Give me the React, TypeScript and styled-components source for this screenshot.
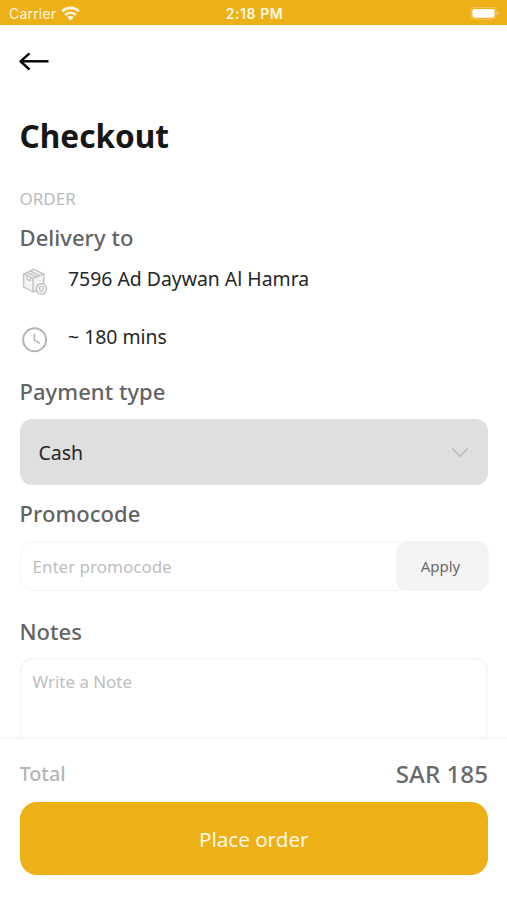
import React, { useState } from "react";
import styled, { createGlobalStyle } from "styled-components";

const GlobalStyle = createGlobalStyle`
  body {
    margin: 0;
    background: white;
    font-family: "Noto Sans", sans-serif;
  }
  * {
    box-sizing: border-box;
  }
`;
const Screen = styled.div`
  width: 100%;
  height: 900px;
  display: flex;
  flex-direction: column;
  overflow: hidden;
  background: white;
`;
const StatusBar = styled.div`
  height: 25px;
  flex-shrink: 0;
  display: grid;
  grid-template-columns: 1fr auto 1fr;
  align-items: center;
  padding: 2px 7px 0px 9px;
  background: #eeb017;
  color: #fff8e4;
  font-family: Inter, sans-serif;
  font-size: 14px;
  line-height: 22px;
`;
const Carrier = styled.div`
  display: flex;
  align-items: center;
  gap: 5px;
  letter-spacing: 0.2px;
`;
const Clock = styled.div`
  font-weight: 600;
  font-size: 14px;
  letter-spacing: 0.55px;
`;
const Battery = styled.div`
  display: flex;
  justify-content: flex-end;
`;
const Header = styled.div`
  height: 73px;
  flex-shrink: 0;
  padding: 26px 0px 0px 18px;
`;
const BackButton = styled.button`
  display: block;
  border: none;
  padding: 0px;
  background: none;
  cursor: pointer;
`;
const Content = styled.div`
  flex: 1;
  min-height: 0;
  overflow: hidden;
  padding: 0px 19px 0px 19.5px;
`;
const Title = styled.h1`
  margin: 16px 0px 0px;
  font-size: 31.6px;
  font-weight: 700;
  line-height: 44px;
  color: #161616;
`;
const Caption = styled.div`
  margin-top: 30px;
  font-size: 17px;
  line-height: 22px;
  color: #bababa;
`;
const SectionTitle = styled.h2<{ top: number }>`
  margin: ${(props) => props.top}px 0px 0px;
  font-size: 22px;
  font-weight: 500;
  line-height: 30px;
  letter-spacing: 0.05px;
  color: #636363;
`;
const InfoRow = styled.div<{ top: number }>`
  margin-top: ${(props) => props.top}px;
  height: 34px;
  display: flex;
  color: #262626;
  font-size: 19.4px;
  line-height: 28px;
`;
const InfoIcon = styled.div`
  width: 48.5px;
  padding-top: 3px;
`;
const Select = styled.div`
  margin-top: 13px;
  height: 66px;
  display: flex;
  align-items: center;
  justify-content: space-between;
  padding: 0px 19px;
  border-radius: 12px;
  background: #dfdfdf;
  color: #262626;
  font-size: 19.5px;
  cursor: pointer;
`;
const PromoField = styled.div`
  margin-top: 13px;
  height: 50px;
  display: flex;
  border: 1.5px solid #f5f5f5;
  border-radius: 14px;
`;
const PromoInput = styled.input`
  flex: 1;
  min-width: 0;
  border: none;
  outline: none;
  padding: 0px 12px;
  background: none;
  font-family: inherit;
  font-size: 17px;
  color: #262626;
  &::placeholder {
    color: #bebebe;
  }
`;
const ApplyButton = styled.button`
  width: 93px;
  margin: -1px -1.5px -1px 0px;
  border: none;
  border-radius: 12px;
  background: #f4f4f4;
  color: #6a6a6a;
  font-family: inherit;
  font-size: 15px;
  padding: 0px 9px 0px 6px;
  cursor: pointer;
`;
const NoteField = styled.textarea`
  display: block;
  width: 100%;
  height: 130px;
  margin-top: 12px;
  padding: 10px 11px;
  border: 2px solid #f7f7f7;
  border-radius: 12px;
  outline: none;
  resize: none;
  font-family: inherit;
  font-size: 16.9px;
  line-height: 24px;
  color: #262626;
  &::placeholder {
    color: #bebebe;
  }
`;
const Footer = styled.div`
  height: 163px;
  flex-shrink: 0;
  padding: 19px 19px 0px 19.5px;
  border-top: 2px solid #f7f7f7;
  background: white;
`;
const TotalRow = styled.div`
  height: 44px;
  display: flex;
  justify-content: space-between;
  line-height: 32px;
  font-weight: 500;
`;
const TotalLabel = styled.div`
  font-size: 19.8px;
  color: #b5b5b5;
`;
const TotalValue = styled.div`
  font-size: 24.2px;
  color: #6a6a6a;
`;
const OrderButton = styled.button`
  display: block;
  width: 100%;
  height: 73px;
  border: none;
  border-radius: 17px;
  background: #eeb017;
  color: #fff8e4;
  font-family: inherit;
  font-size: 20.6px;
  cursor: pointer;
`;

const WifiIcon = () => (
  <svg width="19" height="15" viewBox="0 0 19 15" fill="none" stroke="#fff8e4" strokeWidth="2.7">
    <path d="M1.2 5.2C6 0.7 13 0.7 17.8 5.2" />
    <path d="M4.2 8.9C7.3 6 11.7 6 14.8 8.9" />
    <path d="M9.5 14.4L6.2 11.1C8.1 9.5 10.9 9.5 12.8 11.1Z" fill="#fff8e4" stroke="none" />
  </svg>
);

const BatteryIcon = () => (
  <svg width="30" height="14" viewBox="0 0 30 14">
    <rect x="0.8" y="0.3" width="25.4" height="12" rx="3.6" fill="none" stroke="#f3c862" />
    <rect x="2.4" y="1.9" width="22.2" height="8.8" rx="2.2" fill="white" />
    <path d="M27.6 4.5V8.3C29.2 7.7 29.2 5.1 27.6 4.5Z" fill="#f6d588" />
  </svg>
);

const ArrowIcon = () => (
  <svg width="32" height="20" viewBox="0 0 32 20" fill="none" stroke="black" strokeWidth="2.4">
    <path d="M2.5 10.3H30.5" />
    <path d="M11.5 2.3L2.5 10.3L11.5 18.5" strokeLinejoin="round" />
  </svg>
);

const PackageIcon = () => (
  <svg width="28" height="28" viewBox="0 0 28 28" fill="none" stroke="#c2c2c2" strokeWidth="1.4" strokeLinejoin="round">
    <path d="M3.6 6.2L13.6 1.4L23.8 5.8V19.6L13 24L3.6 19Z" fill="#f4f4f4" />
    <path d="M3.6 6.2L13 10.4L23.8 5.8M13 10.4V24" />
    <path d="M7 4.6L16.6 8.9M10.2 3.1L19.4 7.7" />
    <path d="M7 7.8V11.4L10.4 12.8V9.4" strokeWidth="1.2" />
    <circle cx="21.4" cy="21" r="5.2" fill="#f3f3f3" />
    <path d="M21.4 24C19.8 22.2 19.4 21.2 19.4 20.2A2 2 0 0 1 23.4 20.2C23.4 21.2 23 22.2 21.4 24Z" strokeWidth="1.1" />
  </svg>
);

const TimeIcon = () => (
  <svg width="28" height="28" viewBox="0 0 28 28" fill="none" stroke="#b4b4b4">
    <circle cx="14.6" cy="13.7" r="11.5" strokeWidth="1.9" />
    <path d="M14.4 7.7V14.1L19.9 17.3" strokeWidth="1.5" />
  </svg>
);

const ChevronIcon = () => (
  <svg width="18" height="14" viewBox="0 0 18 14" fill="none" stroke="#b9b9b9" strokeWidth="1.4">
    <path d="M1.5 3.6L9 11.2L16.5 3.6" />
  </svg>
);

function App() {
  const [promocode, setPromocode] = useState<string>("");
  const [note, setNote] = useState<string>("");

  return (
    <Screen>
      <GlobalStyle />
      <StatusBar>
        <Carrier>
          Carrier
          <WifiIcon />
        </Carrier>
        <Clock>2:18 PM</Clock>
        <Battery>
          <BatteryIcon />
        </Battery>
      </StatusBar>
      <Header>
        <BackButton aria-label="Back">
          <ArrowIcon />
        </BackButton>
      </Header>
      <Content>
        <Title>Checkout</Title>
        <Caption>ORDER</Caption>
        <SectionTitle top={12}>Delivery to</SectionTitle>
        <InfoRow top={13}>
          <InfoIcon>
            <PackageIcon />
          </InfoIcon>
          7596 Ad Daywan Al Hamra
        </InfoRow>
        <InfoRow top={24}>
          <InfoIcon>
            <TimeIcon />
          </InfoIcon>
          ~ 180 mins
        </InfoRow>
        <SectionTitle top={19}>Payment type</SectionTitle>
        <Select>
          Cash
          <ChevronIcon />
        </Select>
        <SectionTitle top={13}>Promocode</SectionTitle>
        <PromoField>
          <PromoInput
            placeholder="Enter promocode"
            value={promocode}
            onChange={(e) => setPromocode(e.target.value)}
          />
          <ApplyButton>Apply</ApplyButton>
        </PromoField>
        <SectionTitle top={25}>Notes</SectionTitle>
        <NoteField
          placeholder="Write a Note"
          value={note}
          onChange={(e) => setNote(e.target.value)}
        />
      </Content>
      <Footer>
        <TotalRow>
          <TotalLabel>Total</TotalLabel>
          <TotalValue>SAR 185</TotalValue>
        </TotalRow>
        <OrderButton>Place order</OrderButton>
      </Footer>
    </Screen>
  );
}

export default App;
